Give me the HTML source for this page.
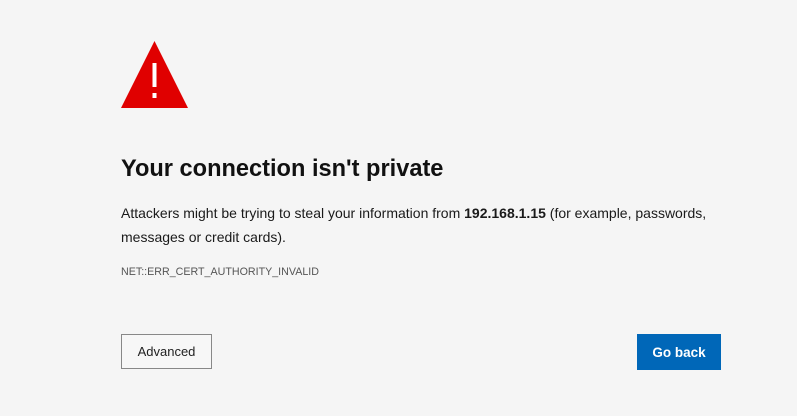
<!DOCTYPE html>
<html><head><style>
html,body{margin:0;padding:0;background:#f5f5f5;width:797px;height:416px;overflow:hidden;font-family:"Liberation Sans",sans-serif;}
.t{position:absolute;left:121px;top:41px;}
h1{position:absolute;left:121px;top:156px;margin:0;font-size:23.6px;font-weight:bold;color:#111;white-space:nowrap;}
.p{position:absolute;left:121px;top:201px;width:640px;font-size:14px;line-height:24px;color:#1a1a1a}
.c{position:absolute;left:121px;top:266px;font-size:10.7px;color:#555;}
.a{position:absolute;left:121px;top:334px;width:89px;height:33px;border:1px solid #888;background:#f7f7f7;font-size:13px;color:#222;display:flex;align-items:center;justify-content:center;box-sizing:content-box}
.g{position:absolute;left:637px;top:334px;width:84px;height:36px;background:#0067b8;color:#fff;font-size:13.5px;font-weight:bold;display:flex;align-items:center;justify-content:center}
</style></head><body>
<svg class="t" width="68" height="68" viewBox="0 0 68 68"><polygon points="33.5,0 67,67 0,67" fill="#e00000"/><rect x="31.5" y="22" width="4" height="24" fill="#fff"/><rect x="31.5" y="52" width="4" height="5" fill="#fff"/></svg>
<h1>Your connection isn't private</h1>
<div class="p">Attackers might be trying to steal your information from <b>192.168.1.15</b> (for example, passwords,<br>messages or credit cards).</div>
<div class="c">NET::ERR_CERT_AUTHORITY_INVALID</div>
<div class="a">Advanced</div>
<div class="g">Go back</div>
</body></html>
